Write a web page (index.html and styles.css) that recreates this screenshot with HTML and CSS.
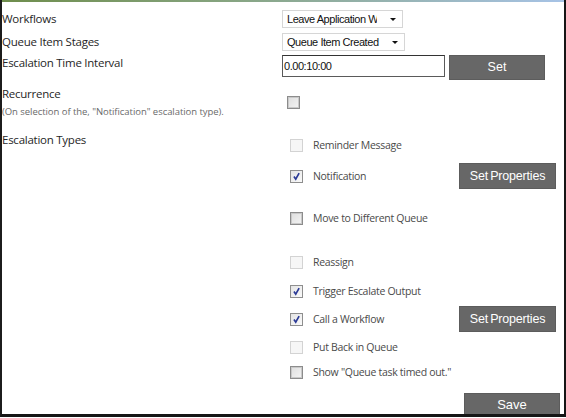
FILE: index.html
```html
<!DOCTYPE html>
<html>
<head>
<meta charset="utf-8">
<link rel="stylesheet" href="styles.css">
</head>
<body>
<div class="frame">
  <div class="topbar"></div>
  <div class="row row-wf">
    <div class="label">Workflows</div>
    <div class="ctl"><div class="select sel-wf"><span class="sel-text">Leave Application Wo</span><span class="arrow"></span></div></div>
  </div>
  <div class="row row-qs">
    <div class="label">Queue Item Stages</div>
    <div class="ctl"><div class="select sel-qs"><span class="sel-text">Queue Item Created</span><span class="arrow"></span></div></div>
  </div>
  <div class="row row-ti">
    <div class="label">Escalation Time Interval</div>
    <div class="ctl ctl-ti"><div class="textbox">0.00:10:00</div><div class="btn btn-set">Set</div></div>
  </div>
  <div class="row row-rec">
    <div class="label">
      <div class="rec-title">Recurrence</div>
      <div class="note">(On selection of the, "Notification" escalation type).</div>
    </div>
    <div class="ctl ctl-rec"><span class="cb cb-off"></span></div>
  </div>
  <div class="row row-types">
    <div class="label">Escalation Types</div>
    <div class="ctl list">
      <div class="item it-1"><span class="cb cb-dis"></span><span class="it-label">Reminder Message</span></div>
      <div class="item it-btn it-2"><span class="cb cb-on"><svg viewBox="0 0 13 13"><path d="M3.5 6.5 L5.6 9.6 L9.6 2.6" fill="none" stroke="#2b3a96" stroke-width="2"/></svg></span><span class="it-label">Notification</span><div class="btn btn-props">Set Properties</div></div>
      <div class="item it-3"><span class="cb cb-off"></span><span class="it-label">Move to Different Queue</span></div>
      <div class="item it-4"><span class="cb cb-dis"></span><span class="it-label">Reassign</span></div>
      <div class="item it-5"><span class="cb cb-on"><svg viewBox="0 0 13 13"><path d="M3.5 6.5 L5.6 9.6 L9.6 2.6" fill="none" stroke="#2b3a96" stroke-width="2"/></svg></span><span class="it-label">Trigger Escalate Output</span></div>
      <div class="item it-btn it-6"><span class="cb cb-on"><svg viewBox="0 0 13 13"><path d="M3.5 6.5 L5.6 9.6 L9.6 2.6" fill="none" stroke="#2b3a96" stroke-width="2"/></svg></span><span class="it-label">Call a Workflow</span><div class="btn btn-props">Set Properties</div></div>
      <div class="item it-7"><span class="cb cb-dis"></span><span class="it-label">Put Back in Queue</span></div>
      <div class="item it-8"><span class="cb cb-off"></span><span class="it-label">Show "Queue task timed out."</span></div>
      <div class="save-row"><div class="btn btn-save">Save</div></div>
    </div>
  </div>
</div>
</body>
</html>
```
FILE: styles.css
```css
html, body {
  margin: 0;
  padding: 0;
  background: #fff;
}
.frame {
  width: 566px;
  height: 417px;
  box-sizing: border-box;
  border-left: 2px solid #1c1c1c;
  border-right: 2px solid #161616;
  border-bottom: 3px solid #161616;
  overflow: hidden;
  font-family: "Open Sans", "Liberation Sans", sans-serif;
  color: #262626;
}
.topbar {
  height: 2px;
  background: linear-gradient(to right, #6e8d4c, #86a480 40%, #a7c3e6);
}
.row {
  display: flex;
}
.label {
  width: 280px;
  flex: none;
  font-size: 11.5px;
  line-height: 16px;
  letter-spacing: -0.25px;
}
.ctl {
  flex: 1;
}
.row-wf {
  margin-top: 8px;
  height: 18px;
  align-items: center;
}
.row-qs {
  margin-top: 5px;
  height: 18px;
  align-items: center;
}
.row-ti {
  margin-top: 4px;
  height: 25px;
  align-items: flex-start;
}
.row-rec {
  margin-top: 6px;
}
.row-types {
  margin-top: 12px;
}
.select {
  position: relative;
  height: 18px;
  box-sizing: border-box;
  border: 1px solid #d6d6d6;
  background: #fff;
  font-family: "Liberation Sans", Arial, sans-serif;
  font-size: 11px;
  letter-spacing: -0.45px;
  line-height: 16px;
  padding-left: 4px;
  color: #111;
  overflow: hidden;
  white-space: nowrap;
}
.sel-wf {
  width: 121px;
}
.sel-qs {
  width: 123px;
}
.sel-text {
  display: block;
  width: 90px;
  overflow: hidden;
}
.sel-qs .sel-text {
  width: 95px;
}
.arrow {
  position: absolute;
  right: 6px;
  top: 7px;
  width: 0;
  height: 0;
  border-left: 3px solid transparent;
  border-right: 3px solid transparent;
  border-top: 3px solid #111;
}
.ctl-ti {
  display: flex;
  gap: 4px;
}
.textbox {
  width: 163px;
  height: 22px;
  box-sizing: border-box;
  border: 1px solid #5a5a5a;
  border-top-color: #333;
  font-family: "Liberation Sans", Arial, sans-serif;
  font-size: 11px;
  letter-spacing: -0.45px;
  line-height: 20px;
  padding-left: 1px;
  color: #111;
}
.btn {
  background: #676767;
  color: #fff;
  font-family: "Liberation Sans", Arial, sans-serif;
  font-size: 12.5px;
  text-align: center;
  box-sizing: border-box;
  border: 1px solid #5c5c5c;
}
.btn-set {
  width: 96px;
  height: 25px;
  line-height: 23px;
}
.rec-title {
  line-height: 16px;
}
.note {
  margin-top: 2px;
  font-size: 9.5px;
  line-height: 16px;
  color: #6a6a6a;
  letter-spacing: -0.05px;
}
.ctl-rec {
  padding-left: 5px;
  padding-top: 10px;
}
.cb {
  display: block;
  width: 13px;
  height: 13px;
  box-sizing: border-box;
  flex: none;
}
.cb svg {
  display: block;
  width: 11px;
  height: 11px;
}
.cb-dis {
  border: 1px solid #d3d3d3;
  background: #f6f6f6;
}
.cb-off {
  border: 1px solid #8c8c8c;
  background: linear-gradient(135deg, #dedede, #f4f4f4);
  box-shadow: inset 0 0 0 1px #c9c9c9;
}
.cb-on {
  border: 1px solid #8e8e8e;
  background: linear-gradient(135deg, #e4e4e4, #fafafa);
}
.list {
  display: flex;
  flex-direction: column;
  padding-top: 1px;
}
.item {
  display: flex;
  align-items: center;
  height: 24px;
  padding-left: 8px;
}
.it-btn {
  height: 26px;
}
.it-label {
  width: 146px;
  margin-left: 10px;
  font-size: 10.5px;
  color: #4a4a4a;
  letter-spacing: -0.3px;
  white-space: nowrap;
}
.btn-props {
  width: 97px;
  height: 26px;
  line-height: 24px;
  font-size: 12.5px;
  letter-spacing: -0.2px;
  word-spacing: -1px;
}
.it-2 { margin-top: 6px; }
.it-3 { margin-top: 17px; }
.it-4 { margin-top: 20px; }
.it-5 { margin-top: 5px; }
.it-6 { margin-top: 3px; }
.it-7 { margin-top: 3px; }
.it-8 { margin-top: 1px; }
.save-row {
  margin-top: 9px;
  padding-left: 182px;
}
.btn-save {
  width: 96px;
  height: 28px;
  line-height: 22px;
  font-size: 13px;
}
```
